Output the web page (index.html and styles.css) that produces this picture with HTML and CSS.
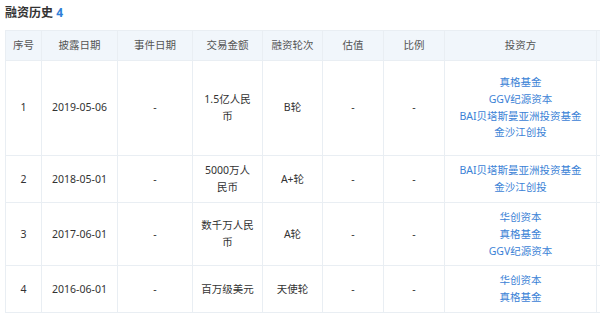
FILE: index.html
```html
<!DOCTYPE html>
<html lang="zh-CN">
<head>
    <meta charset="UTF-8">
    <meta name="viewport" content="width=device-width, initial-scale=1.0">
    <title>融资历史</title>
    <link rel="stylesheet" href="styles.css">
</head>
<body>
<!-- 融资历史 -->
<h3 class="title">融资历史 <span class="count">4</span></h3>

<div class="table-wrap">
<table class="finance-table">
    <colgroup>
        <col class="c-no">
        <col class="c-date">
        <col class="c-date2">
        <col class="c-amount">
        <col class="c-round">
        <col class="c-value">
        <col class="c-ratio">
        <col class="c-investor">
        <col class="c-extra">
    </colgroup>
    <thead>
        <tr>
            <th>序号</th>
            <th>披露日期</th>
            <th>事件日期</th>
            <th>交易金额</th>
            <th>融资轮次</th>
            <th>估值</th>
            <th>比例</th>
            <th>投资方</th>
            <th></th>
        </tr>
    </thead>
    <tbody>
        <tr class="tall">
            <td>1</td>
            <td>2019-05-06</td>
            <td>-</td>
            <td>1.5亿人民<br>币</td>
            <td>B轮</td>
            <td>-</td>
            <td>-</td>
            <td class="investors">
                <a href="#">真格基金</a><br>
                <a href="#">GGV纪源资本</a><br>
                <a href="#">BAI贝塔斯曼亚洲投资基金</a><br>
                <a href="#">金沙江创投</a>
            </td>
            <td></td>
        </tr>
        <tr class="two">
            <td>2</td>
            <td>2018-05-01</td>
            <td>-</td>
            <td>5000万人<br>民币</td>
            <td>A+轮</td>
            <td>-</td>
            <td>-</td>
            <td class="investors">
                <a href="#">BAI贝塔斯曼亚洲投资基金</a><br>
                <a href="#">金沙江创投</a>
            </td>
            <td></td>
        </tr>
        <tr>
            <td>3</td>
            <td>2017-06-01</td>
            <td>-</td>
            <td>数千万人民<br>币</td>
            <td>A轮</td>
            <td>-</td>
            <td>-</td>
            <td class="investors">
                <a href="#">华创资本</a><br>
                <a href="#">真格基金</a><br>
                <a href="#">GGV纪源资本</a>
            </td>
            <td></td>
        </tr>
        <tr>
            <td>4</td>
            <td>2016-06-01</td>
            <td>-</td>
            <td>百万级美元</td>
            <td>天使轮</td>
            <td>-</td>
            <td>-</td>
            <td class="investors">
                <a href="#">华创资本</a><br>
                <a href="#">真格基金</a>
            </td>
            <td></td>
        </tr>
    </tbody>
</table>
</div>
</body>
</html>
```

FILE: styles.css
```css
body {
    font-family: "Noto Sans", "Noto Sans CJK SC", sans-serif;
    font-size: 10.5px;
    color: #333;
    background-color: #fff;
    margin: 0;
    padding: 0 0 0 5px;
    overflow: hidden;
}

.title {
    font-size: 12px;
    font-weight: bold;
    color: #333;
    margin: 0;
    height: 30px;
    line-height: 26px;
}

.title .count {
    color: #2f7fd8;
}

.table-wrap {
    width: 595px;
    overflow: hidden;
}

/* Table */
.finance-table {
    border-collapse: collapse;
    table-layout: fixed;
    width: 700px;
}

.c-no { width: 36px; }
.c-date { width: 76px; }
.c-date2 { width: 75px; }
.c-amount { width: 70px; }
.c-round { width: 60px; }
.c-value { width: 61px; }
.c-ratio { width: 61px; }
.c-investor { width: 152px; }
.c-extra { width: 109px; }

.finance-table th,
.finance-table td {
    border: 1px solid #e9eef3;
    text-align: center;
    vertical-align: middle;
    line-height: 16.7px;
    padding: 6px 2px;
}

.finance-table th {
    background-color: #f1f6fb;
    color: #555;
    font-weight: normal;
    height: 16px;
}

.finance-table tr.tall td {
    height: 82px;
}

.finance-table tr.two td {
    padding-top: 6.5px;
    padding-bottom: 6.5px;
}

.investors a {
    color: #3b82d6;
    text-decoration: none;
}
```
